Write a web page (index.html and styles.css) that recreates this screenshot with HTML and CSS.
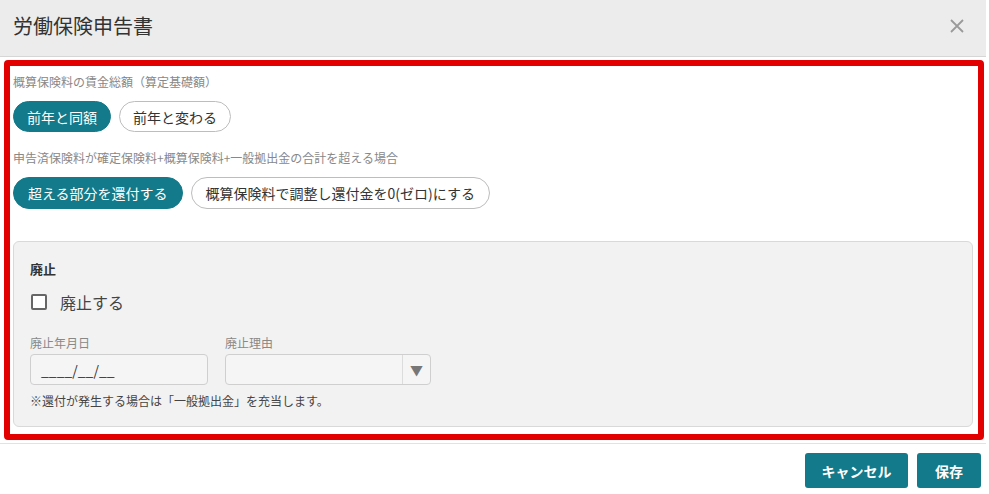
FILE: index.html
```html
<!DOCTYPE html>
<html lang="ja">
<head>
<meta charset="utf-8">
<link rel="stylesheet" href="styles.css">
</head>
<body>
<div class="modal">
  <div class="header">
    <h1 class="title">労働保険申告書</h1>
    <button class="close" aria-label="close">
      <svg width="14" height="14" viewBox="0 0 14 14"><path d="M1 1L13 13M13 1L1 13" stroke="#9a9a9a" stroke-width="1.8" fill="none"/></svg>
    </button>
  </div>
  <div class="body">
    <div class="highlight">
      <div class="label">概算保険料の賃金総額（算定基礎額）</div>
      <div class="pills">
        <span class="pill active">前年と同額</span>
        <span class="pill">前年と変わる</span>
      </div>
      <div class="label label2">申告済保険料が確定保険料+概算保険料+一般拠出金の合計を超える場合</div>
      <div class="pills pills2">
        <span class="pill active">超える部分を還付する</span>
        <span class="pill">概算保険料で調整し還付金を0(ゼロ)にする</span>
      </div>
      <div class="panel">
        <div class="panel-title">廃止</div>
        <label class="check"><span class="box"></span><span>廃止する</span></label>
        <div class="fields">
          <div class="field">
            <div class="flabel">廃止年月日</div>
            <div class="input date">____/__/__</div>
          </div>
          <div class="field">
            <div class="flabel">廃止理由</div>
            <div class="input select"><span class="sel-val"></span><span class="arrow">▼</span></div>
          </div>
        </div>
        <div class="note">※還付が発生する場合は「一般拠出金」を充当します。</div>
      </div>
    </div>
  </div>
  <div class="footer">
    <button class="btn">キャンセル</button>
    <button class="btn save">保存</button>
  </div>
</div>
</body>
</html>
```

FILE: styles.css
```css
* { box-sizing: border-box; }
html, body { margin: 0; padding: 0; background: #fff; }
body {
  font-family: "Noto Sans CJK JP", "Noto Sans", "Liberation Sans", sans-serif;
  color: #333;
}
.modal { width: 986px; }
.header {
  height: 57px;
  background: #ececec;
  border-bottom: 1px solid #d6d6d6;
  display: flex;
  align-items: center;
  justify-content: space-between;
  padding: 0 22px 0 13px;
}
.title {
  margin: 0;
  font-size: 20px;
  font-weight: 400;
  color: #333;
  line-height: 1;
  padding-bottom: 4px;
}
.close {
  border: 0;
  background: none;
  padding: 0;
  width: 14px;
  height: 14px;
  display: flex;
  margin-bottom: 4px;
}
.body {
  padding: 3px 2px 3px 4px;
  border-bottom: 1px solid #e2e2e2;
}
.highlight {
  border: 6px solid #e30000;
  border-radius: 4px;
  padding: 8px 5px 7px 3px;
}
.label {
  font-size: 12px;
  line-height: 16px;
  color: #888;
}
.pills {
  display: flex;
  gap: 8px;
  margin-top: 11px;
}
.pill {
  height: 31px;
  border: 1px solid #bdbdbd;
  border-radius: 16px;
  padding: 0 13px;
  font-size: 14px;
  display: flex;
  align-items: center;
  color: #333;
  background: #fff;
}
.pill.active {
  background: #127a8a;
  border-color: #127a8a;
  color: #fff;
}
.label2 { margin-top: 18px; }
.pills2 { margin-top: 11px; }
.pills2 .pill { height: 32px; padding: 0 14px; }
.panel {
  margin-top: 32px;
  background: #f2f2f2;
  border: 1px solid #d9d9d9;
  border-radius: 6px;
  padding: 18px 16px 17px 16px;
  height: 186px;
}
.panel-title {
  font-size: 13px;
  font-weight: 700;
  line-height: 18px;
  color: #333;
}
.check {
  display: flex;
  align-items: center;
  gap: 13px;
  margin-top: 14px;
  font-size: 16px;
  line-height: 20px;
  color: #444;
  padding-left: 1px;
}
.box {
  width: 16px;
  height: 16px;
  border: 2px solid #666;
  border-radius: 2px;
  background: #fff;
  display: inline-block;
}
.fields {
  display: flex;
  gap: 17px;
  margin-top: 23px;
}
.flabel {
  font-size: 12px;
  line-height: 16px;
  color: #888;
}
.input {
  margin-top: 3px;
  height: 31px;
  border: 1px solid #cfcfcf;
  border-radius: 4px;
  background: #f5f5f5;
  font-size: 14px;
  color: #333;
  display: flex;
  align-items: center;
}
.date {
  width: 178px;
  padding-left: 10px;
}
.select {
  width: 206px;
  justify-content: space-between;
}
.arrow {
  width: 28px;
  height: 100%;
  border-left: 1px solid #dcdcdc;
  display: flex;
  align-items: center;
  justify-content: center;
  font-size: 13px;
  color: #777;
}
.note {
  margin-top: 8px;
  font-size: 12px;
  line-height: 16px;
  color: #444;
}
.footer {
  display: flex;
  justify-content: flex-end;
  gap: 9px;
  padding: 9px 5px 0 0;
}
.btn {
  height: 35px;
  border: 0;
  border-radius: 3px;
  background: #127a8a;
  color: #fff;
  font-family: inherit;
  font-size: 14px;
  font-weight: 700;
  width: 103px;
  padding: 0;
}
.btn.save { width: 64px; }
```
